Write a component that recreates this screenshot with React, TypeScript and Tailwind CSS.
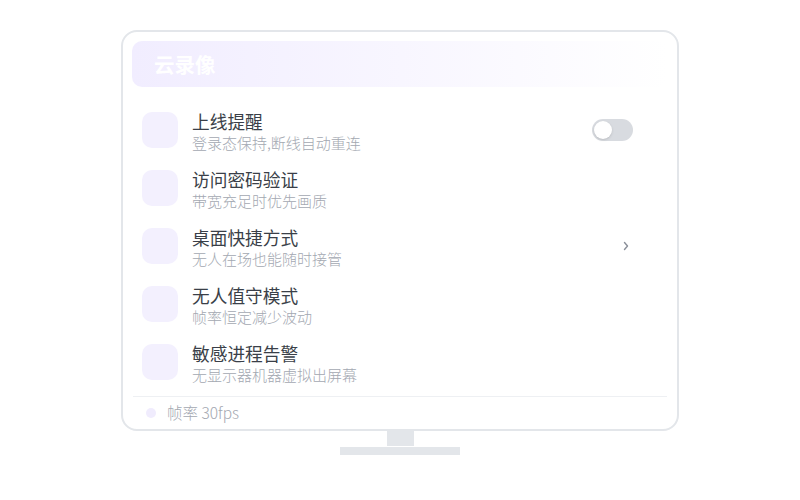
import React from "react";

const rows = [
  { t: "上线提醒", s: "登录态保持,断线自动重连", r: "toggle" },
  { t: "访问密码验证", s: "带宽充足时优先画质", r: "" },
  { t: "桌面快捷方式", s: "无人在场也能随时接管", r: "chev" },
  { t: "无人值守模式", s: "帧率恒定减少波动", r: "" },
  { t: "敏感进程告警", s: "无显示器机器虚拟出屏幕", r: "" },
];

export default function App() {
  return (
    <div
      className="w-[800px] h-[500px] bg-white pt-[30px] flex flex-col items-center"
      style={{ fontFamily: '"Noto Sans CJK SC", "Noto Sans", sans-serif' }}
    >
      <div className="w-[558px] h-[401px] border-2 border-[#e3e6ea] rounded-[16px] px-[9px] pt-[9px] flex flex-col">
        <div className="h-[46px] rounded-[10px] bg-gradient-to-r from-[#f1edff] via-[#f8f6ff] to-white flex items-center pl-[22px]">
          <span className="text-[20.5px] font-bold text-white leading-none">云录像</span>
        </div>
        <div className="mt-[14px] flex flex-col">
          {rows.map((r) => (
            <div key={r.t} className="h-[58px] flex items-center pl-[10px] pr-[35px]">
              <div className="w-[36px] h-[36px] rounded-[10px] bg-[#f3f0fe] shrink-0" />
              <div className="ml-[14px] mt-[2px] flex flex-col flex-1">
                <span className="text-[17.7px] leading-[24px] font-normal text-[#3a3f48]">{r.t}</span>
                <span className="text-[15px] leading-[20px] font-light text-[#a3a8b1]">{r.s}</span>
              </div>
              {r.r === "toggle" && (
                <div className="w-[41px] h-[22px] rounded-full bg-[#d8dbe0] p-[2px] flex items-center">
                  <div className="w-[18px] h-[18px] rounded-full bg-white shadow-sm" />
                </div>
              )}
              {r.r === "chev" && (
                <svg width="8" height="12" viewBox="0 0 8 12" className="mr-[3px]">
                  <path d="M2.5 2.5 L5.5 6 L2.5 9.5" fill="none" stroke="#8b909a" strokeWidth="1.4" strokeLinecap="round" strokeLinejoin="round" />
                </svg>
              )}
            </div>
          ))}
        </div>
        <div className="mt-[5px] mx-[1px] h-px bg-[#eef0f3]" />
        <div className="flex-1 flex items-center pl-[14px]">
          <div className="w-[10px] h-[10px] rounded-full bg-[#f0ecfd]" />
          <span className="ml-[11px] text-[15.5px] font-light text-[#a3a8b1] leading-none">帧率 30fps</span>
        </div>
      </div>
      <div className="w-[27px] h-[15px] bg-[#e3e6ea]" />
      <div className="w-[120px] h-[8px] bg-[#e3e6ea] mt-[1px]" />
    </div>
  );
}
